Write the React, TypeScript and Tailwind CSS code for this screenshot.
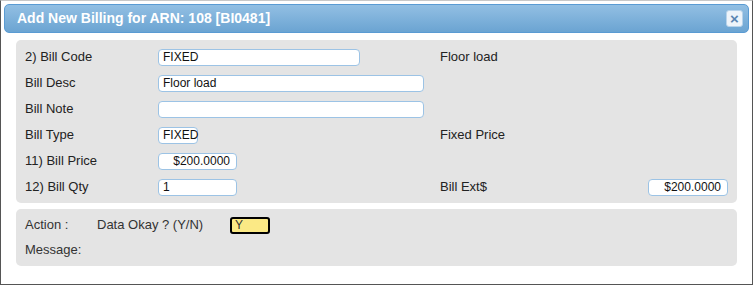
import React from "react";

const font = { fontFamily: "Tahoma, 'Liberation Sans', 'DejaVu Sans', sans-serif" };

const Field: React.FC<{ value: string; w: string; right?: boolean }> = ({ value, w, right }) => (
  <div
    className={`h-[17px] ${w} rounded-[4px] border border-[#9cc3e5] bg-white text-[12px] leading-[15px] text-[#111] ${
      right ? "pr-[6px] text-right" : "px-[4px]"
    }`}
  >
    {value}
  </div>
);

export default function App() {
  const rows: { label: string; field: React.ReactNode; side?: string; sideField?: React.ReactNode }[] = [
    { label: "2) Bill Code", field: <Field value="FIXED" w="w-[202px]" />, side: "Floor load" },
    { label: "Bill Desc", field: <Field value="Floor load" w="w-[266px]" /> },
    { label: "Bill Note", field: <Field value="" w="w-[266px]" /> },
    { label: "Bill Type", field: <Field value="FIXED" w="w-[40px]" />, side: "Fixed Price" },
    { label: "11) Bill Price", field: <Field value="$200.0000" w="w-[79px]" right /> },
    {
      label: "12) Bill Qty",
      field: <Field value="1" w="w-[79px]" />,
      side: "Bill Ext$",
      sideField: <Field value="$200.0000" w="w-[80px]" right />,
    },
  ];

  return (
    <div className="h-[285px] w-[753px] border border-t-[#c8c8c8] border-[#555] bg-white" style={font}>
      <div className="mx-[3px] mt-[3px] flex h-[29px] items-center justify-between rounded-[5px] border border-[#5a9bd3] bg-gradient-to-b from-[#92bfe3] to-[#6ba4d2] pl-[12px] pr-[5px]">
        <span className="text-[14px] font-bold text-white">Add New Billing for ARN: 108 [BI0481]</span>
        <div className="flex h-[17px] w-[17px] items-center justify-center rounded-[3px] border border-[#b8d3ea] bg-[#eef4fa] text-[15px] font-black leading-none text-[#5a86b2]">
          ×
        </div>
      </div>

      <div className="mx-[15px] mt-[7px] rounded-[5px] bg-[#e4e4e4] px-[9px] pt-[4px] pb-[3px] text-[13px] text-[#222]">
        {rows.map((r) => (
          <div key={r.label} className="flex h-[26px] items-center">
            <div className="w-[133px]">{r.label}</div>
            <div className="w-[282px]">{r.field}</div>
            <div className="flex flex-1 items-center justify-between">
              <span>{r.side}</span>
              {r.sideField}
            </div>
          </div>
        ))}
      </div>

      <div className="mx-[15px] mt-[6px] h-[57px] rounded-[5px] bg-[#e4e4e4] px-[9px] pt-[6px] text-[13px] text-[#333]">
        <div className="flex h-[20px] items-center">
          <span className="w-[72px]">Action :</span>
          <span className="w-[133px]">Data Okay ? (Y/N)</span>
          <div className="h-[17px] w-[40px] rounded-[3px] border-2 border-black bg-[#fbe985] px-[3px] text-[12px] leading-[13px] text-[#333]">
            Y
          </div>
        </div>
        <div className="mt-[6px] flex h-[18px] items-center">Message:</div>
      </div>
    </div>
  );
}
